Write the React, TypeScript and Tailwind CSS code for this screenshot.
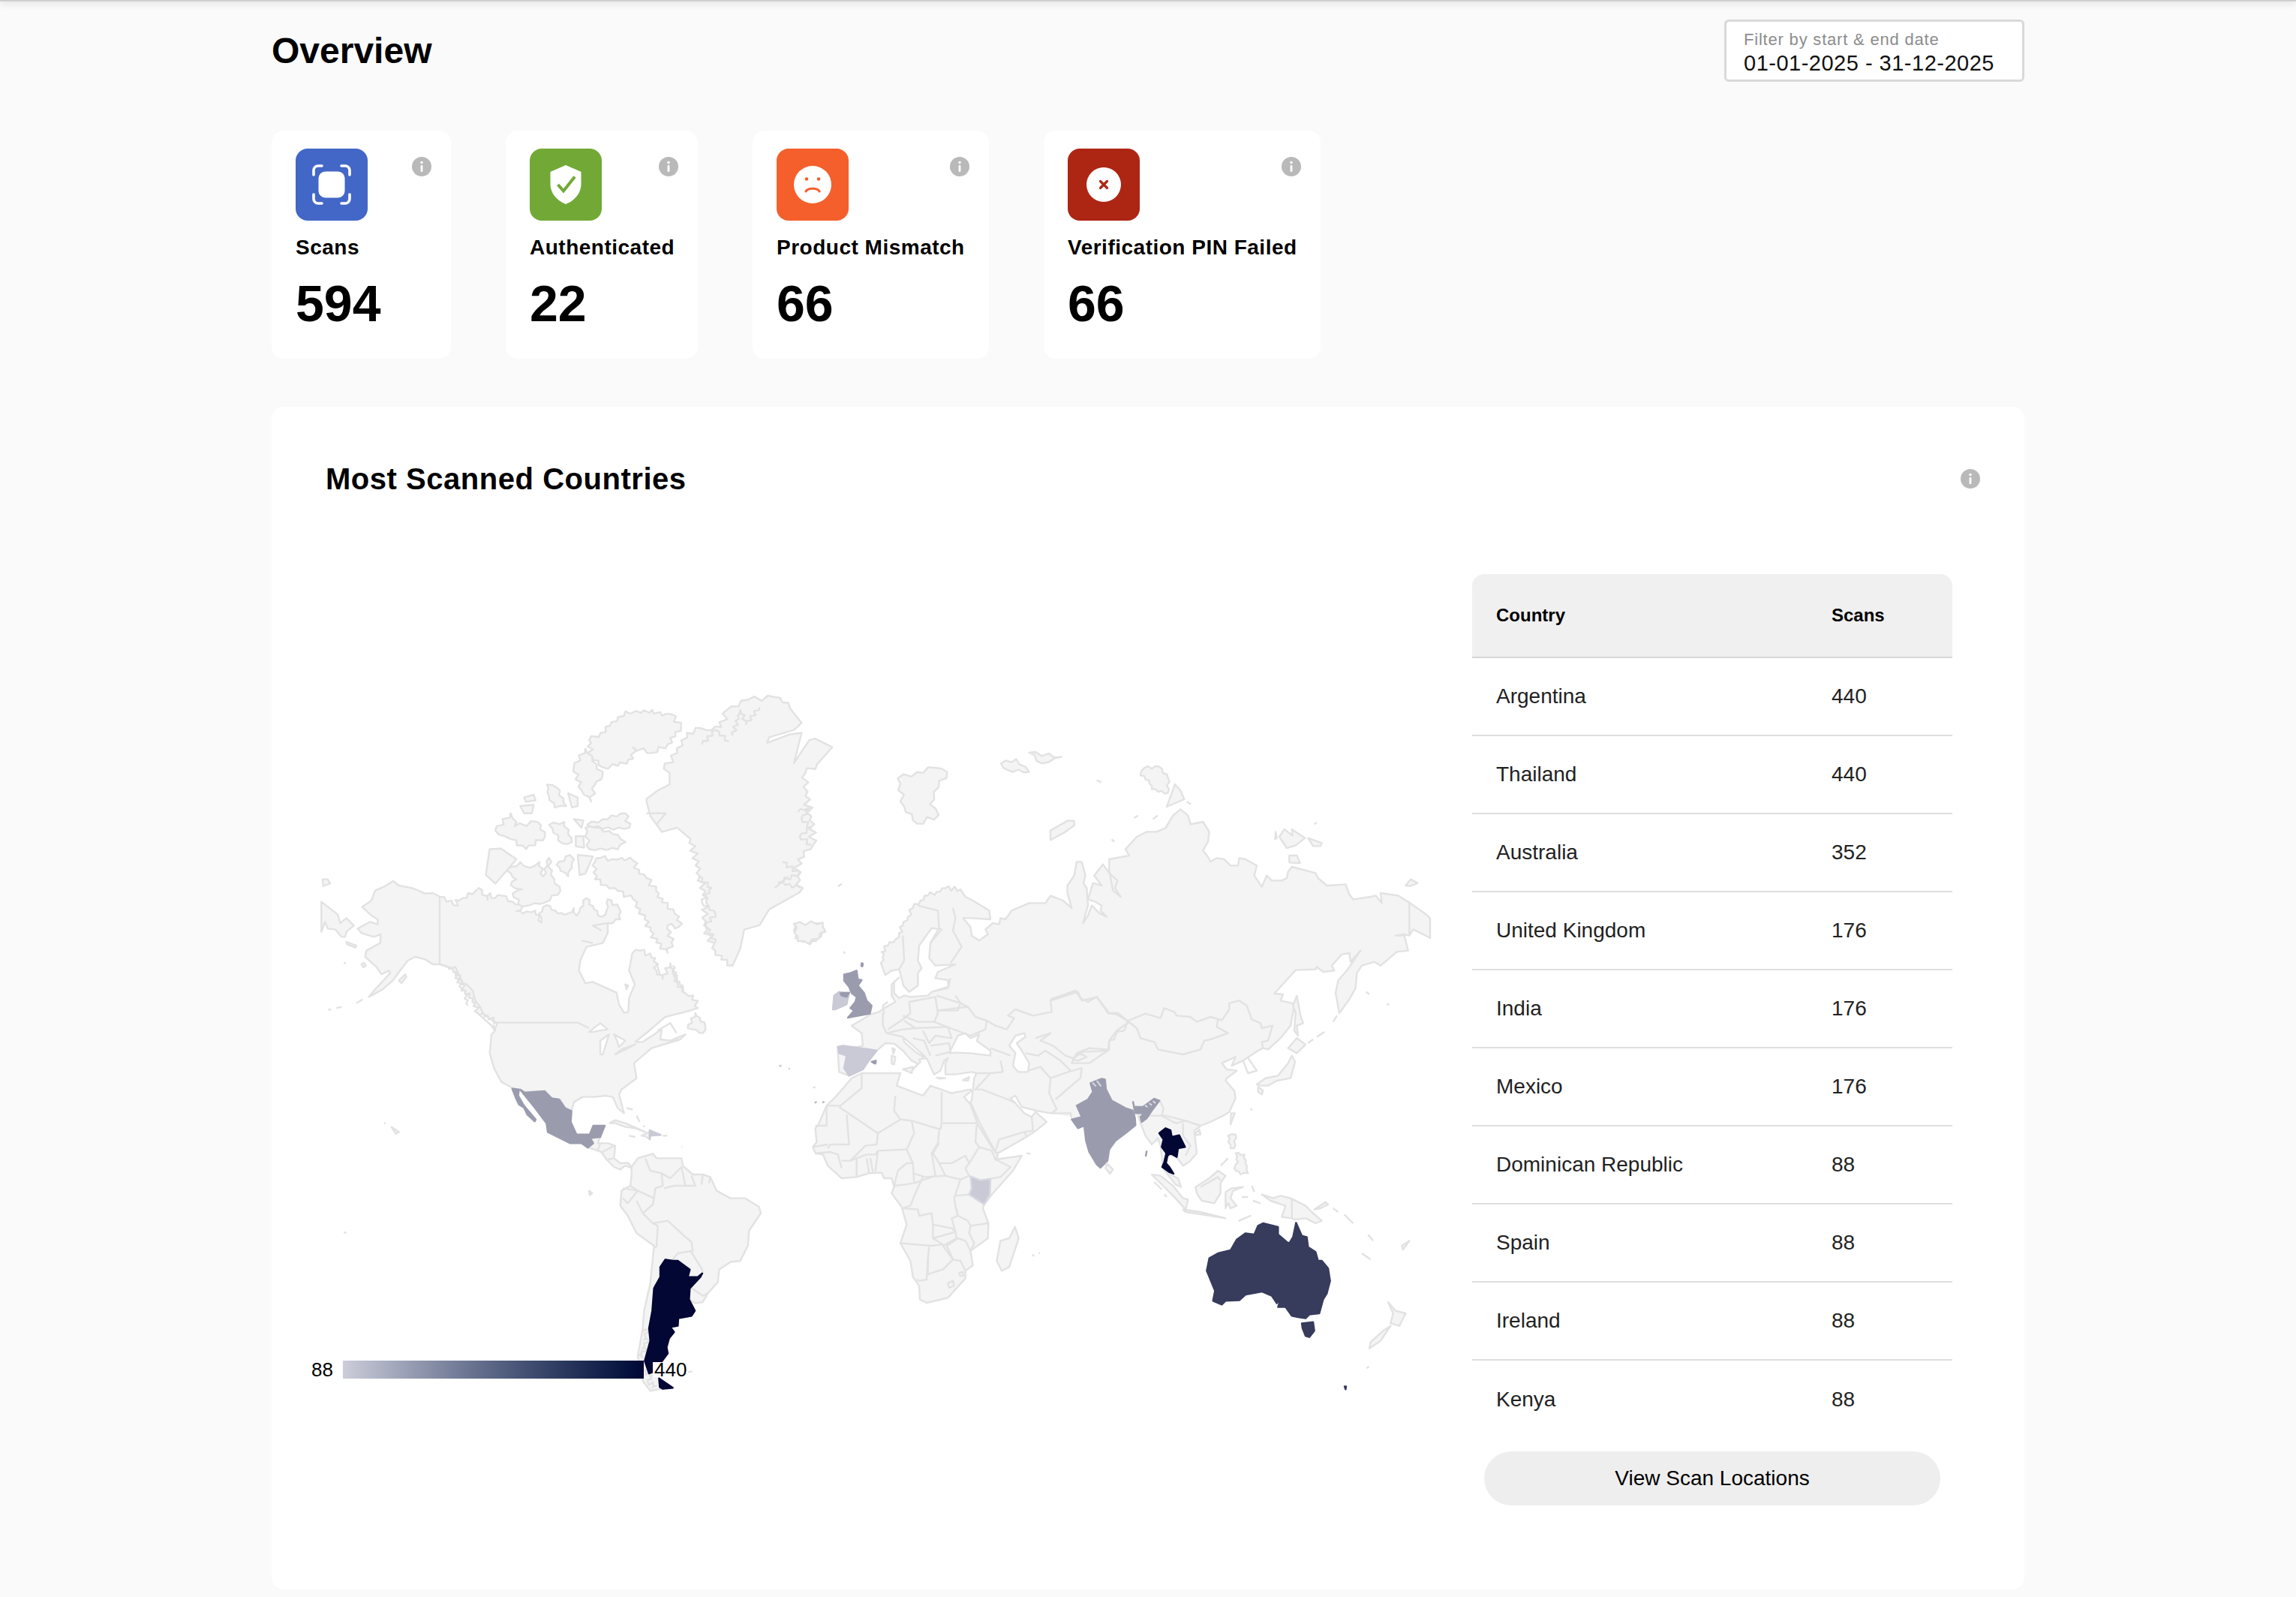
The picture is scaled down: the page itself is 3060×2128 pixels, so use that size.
import type { ReactNode } from 'react';

const LAND = '#f4f4f4';
const LINE = '#e2e2e2';
const LIGHT = '#c9cad6';
const MID = '#9a9cae';
const DEEP = '#373b5c';
const DARK = '#020734';

const STATS = [
	{ label: 'Scans', value: '594', color: 'bg-[#4267c6]', width: 'w-[239px]', icon: 'scan' },
	{ label: 'Authenticated', value: '22', color: 'bg-[#72a936]', width: 'w-[256px]', icon: 'shield' },
	{ label: 'Product Mismatch', value: '66', color: 'bg-[#f45f2c]', width: 'w-[315px]', icon: 'sad' },
	{ label: 'Verification PIN Failed', value: '66', color: 'bg-[#ad2513]', width: 'w-[369px]', icon: 'fail' },
];

const COUNTRIES = [
	['Argentina', '440'],
	['Thailand', '440'],
	['Australia', '352'],
	['United Kingdom', '176'],
	['India', '176'],
	['Mexico', '176'],
	['Dominican Republic', '88'],
	['Spain', '88'],
	['Ireland', '88'],
	['Kenya', '88'],
];

// fjord coasts: split each edge in short steps and push them to alternate sides
const jagged = (points: string, amp: number, step = 16) => {
	const pts = points.trim().split(/\s+/).map((p) => p.split(',').map(Number));
	const out: string[] = [];
	let n = 0;
	for (let i = 0; i < pts.length - 1; i++) {
		const [x1, y1] = pts[i];
		const [x2, y2] = pts[i + 1];
		const len = Math.hypot(x2 - x1, y2 - y1) || 1;
		const parts = Math.max(1, Math.round(len / step));
		for (let j = 0; j < parts; j++) {
			const t = j / parts;
			n++;
			const d = j === 0 ? 0 : (n % 2 ? 1 : -1) * amp * (0.4 + 0.6 * Math.abs(Math.sin(n * 12.9898)));
			out.push(`${(x1 + (x2 - x1) * t - ((y2 - y1) / len) * d).toFixed(1)},${(y1 + (y2 - y1) * t + ((x2 - x1) / len) * d).toFixed(1)}`);
		}
	}
	out.push(pts[pts.length - 1].join(','));
	return out.join(' ');
};

const InfoIcon = () => (
	<svg viewBox="0 0 26 26" className="h-[26px] w-[26px] shrink-0">
		<circle cx="13" cy="13" r="13" fill="#b9b9b9" />
		<circle cx="13" cy="7.5" r="1.8" fill="#fff" />
		<rect x="11.6" y="11" width="2.8" height="9" rx="1" fill="#fff" />
	</svg>
);

const StatIcon = ({ name }: { name: string }) => {
	if (name === 'scan') {
		return (
			<svg viewBox="0 0 96 96" className="h-24 w-24">
				<rect x="30.5" y="30.5" width="35" height="35" rx="9" fill="#fff" />
				<path
					d="M24 35v-6a6 6 0 0 1 6-6h5M61 23h5a6 6 0 0 1 6 6v6M72 61v6a6 6 0 0 1-6 6h-5M35 73h-5a6 6 0 0 1-6-6v-6"
					fill="none"
					stroke="#fff"
					strokeWidth="3.6"
					strokeLinecap="round"
				/>
			</svg>
		);
	}
	if (name === 'shield') {
		return (
			<svg viewBox="0 0 96 96" className="h-24 w-24">
				<path d="M48 22l20.5 9v16c0 12-8 22-20.5 27C35.5 69 27.5 59 27.5 47V31z" fill="#fff" />
				<path d="M37.5 48l7.5 8.5L60 37.5" fill="none" stroke="#72a936" strokeWidth="4" />
			</svg>
		);
	}
	if (name === 'sad') {
		return (
			<svg viewBox="0 0 96 96" className="h-24 w-24">
				<circle cx="48" cy="48" r="25" fill="#fff" />
				<circle cx="40" cy="40.5" r="2.3" fill="#f45f2c" />
				<circle cx="56" cy="40.5" r="2.3" fill="#f45f2c" />
				<path d="M39 57c2.5-5 15.5-5 18 0" fill="none" stroke="#f45f2c" strokeWidth="3" strokeLinecap="round" />
			</svg>
		);
	}
	return (
		<svg viewBox="0 0 96 96" className="h-24 w-24">
			<circle cx="48" cy="48" r="23" fill="#fff" />
			<path d="M43.5 43.5l9 9M52.5 43.5l-9 9" stroke="#ad2513" strokeWidth="3.2" strokeLinecap="round" />
		</svg>
	);
};

const Shape = ({ points, fill = LAND, stroke = LINE, jag = 0, step = 14 }: { points: string; fill?: string; stroke?: string; jag?: number; step?: number }) => (
	<polygon
		points={jag ? jagged(`${points} ${points.split(' ')[0]}`, jag, step) : points}
		fill={fill}
		stroke={stroke}
		strokeWidth="2.4"
		strokeLinejoin="round"
		vectorEffect="non-scaling-stroke"
	/>
);

const Lines = ({ items, color = LINE, width = 2.4 }: { items: string[]; color?: string; width?: number }) => (
	<>
		{items.map((points) => (
			<polyline
				key={points}
				points={points}
				fill="none"
				stroke={color}
				strokeWidth={width}
				strokeLinejoin="round"
				vectorEffect="non-scaling-stroke"
			/>
		))}
	</>
);

// every group below uses the coordinates of one crop of the map, so it stays readable against it
const Crop = ({ x, y, sx = 1 / 3, sy = 1 / 3, children }: { x: number; y: number; sx?: number; sy?: number; children: ReactNode }) => (
	<g transform={`translate(${x} ${y}) scale(${sx} ${sy})`}>{children}</g>
);

const WEST_COAST = [
	'1020,40 1000,70 935,70 865,100 840,135 820,130 815,155 790,150 760,175 770,195 735,220 705,200 700,165 670,130 700,130 780,135 775,100 710,60 680,45 660,15',
	jagged('660,15 600,10 565,25 530,40 500,60 470,90 450,125 430,160 415,190 400,215 370,240 345,265 350,285 342,310', 9, 13),
	'360,358 385,340 415,335 425,370 432,400 455,425 490,400 490,350 505,330 490,300 495,240 545,170 585,175 540,230 535,290 560,320 640,315 570,345 560,370 610,378 612,405 545,425 530,440 460,445 435,440 415,450 395,430 395,385 415,368 385,395 385,440 400,465 355,490 335,505 300,515 260,540 225,560 265,590 270,640 250,645 170,645 170,665 175,745 215,760 270,735 290,705 325,660 360,630 395,632 430,660 465,700 490,712 470,735 500,705 495,695 520,690 480,665 435,625 430,605 470,640 515,680 530,700 545,735 555,755 580,740 595,700 610,690 600,710 600,755 640,755 705,745 725,750 715,770 705,860 700,865 735,945 800,1065 810,1070 915,1010 955,985 1005,945 960,905 945,925 915,910 880,870 860,850 880,840 905,885 965,900 1020,910 1100,910 1105,930',
].join(' ');

const EAST_COAST =
	'0,520 50,540 85,570 68,510 68,480 95,440 105,385 125,385 140,440 132,470 145,490 150,560 130,630 150,600 165,560 195,590 225,605 200,580 205,560 180,545 150,535 170,470 205,480 175,440 190,420 210,395 235,430 268,460 258,490 280,525 250,500 235,420 235,375 315,360 300,335 345,285 385,265 425,265 460,250 490,200 520,175 550,200 560,235 610,225 635,265 630,305 610,340 630,365 640,385 665,370 695,375 720,400 750,400 755,370 780,375 825,400 815,440 845,485 865,440 885,460 925,460 945,450 950,425 965,405 1060,430 1070,450 1105,480 1180,475 1195,515 1210,535 1280,525 1300,520 1325,550 1320,510 1390,520 1435,548 1495,590 1518,610 1518,690 1490,675 1450,655 1435,680 1410,675 1380,680 1415,680 1430,740 1385,745 1320,800 1295,785 1245,800 1225,830 1220,890 1195,935 1155,990 1140,910 1150,860 1185,820 1240,740 1200,785 1195,750 1165,755 1125,800 1135,820 1090,825 1065,805 1060,815 980,818 895,912 930,915 920,940 965,950 975,960 960,1040 920,1090 870,1135 850,1130 830,1140 770,1180 725,1200 740,1165 685,1190 705,1215 745,1220 705,1250 700,1260 735,1300 740,1330 715,1385 690,1400 640,1425 600,1440 590,1450';

const NORTH_AMERICA = [
	'312,132 335,150 362,155 395,162 440,182 470,180 500,195',
	jagged('500,195 570,230 560,208 590,200 640,172 655,160 690,207 700,180 705,200 745,190 790,215 830,235 805,252 830,262 880,250 905,298 895,262 925,228 945,247 970,262 1010,262 1035,240 1045,270 1060,240 1085,200 1115,245 1145,275 1165,250 1170,205 1215,240 1220,285 1170,300', 7, 15),
	'1170,340 1150,380 1085,395 1060,450 1055,490 1080,540 1110,535 1205,578 1215,625 1235,658 1252,655 1255,600 1278,545 1255,490 1268,420',
	jagged('1268,420 1300,410 1360,440 1365,490 1390,522 1420,460 1450,540 1480,580 1512,590 1530,640', 10, 14),
	'1480,655 1400,675 1330,735 1280,775 1310,775 1385,725 1380,765 1420,770 1480,745 1460,765 1410,780 1345,800 1310,830 1275,860 1285,920 1225,965 1215,985 1235,1060 1210,1040 1190,995 1160,990 1120,995 1070,995 1035,1015 1025,1050 1000,1040 980,1005 955,1008 918,972 840,975 790,960 745,935 715,880 698,820 705,745 715,735 728,700',
	jagged('728,700 690,670 650,660 640,620 600,570 565,495 530,475', 10, 11),
	'500,465 470,465 440,445 400,435 370,450 340,490 310,530 270,565 215,595 240,565 300,500 295,490 265,505 245,475 200,435 205,410 260,380 262,345 235,355 185,340 170,322 220,295 250,305 250,285 225,270 188,235 225,210 240,170 275,155',
].join(' ');

const GREENLAND = [
	'905,430 935,400 965,380 965,340 950,325',
	jagged('950,325 985,270 1010,200 1050,185 1060,190 1100,180 1115,120 1170,85 1240,75 1275,95', 9, 16),
	'1280,115 1310,165 1290,190 1225,215 1220,235 1280,205 1310,200 1290,305 1330,225 1345,220 1390,250 1350,310',
	jagged('1350,310 1320,340 1320,420 1335,490 1340,590 1300,640 1300,700 1305,755', 10, 15),
	'1225,815 1200,870 1160,885 1150,950 1130,1010',
	jagged('1130,1010 1100,990 1085,960 1055,870 1060,790 1045,700 1020,570', 9, 13),
	'985,530 945,545 915,490 905,440',
].join(' ');

const Asia = () => (
	<>
		<Crop x={1060} y={1180}>
			<polygon points={`${WEST_COAST} 1130,880 1300,700 1560,600 1560,400 1300,150 1110,130`} fill={LAND} />
		</Crop>
		<Crop x={1400} y={1020}>
			<polygon points={`${EAST_COAST} 530,1480 480,1500 400,1510 385,1400 340,1400 140,1440 85,1405 0,1390`} fill={LAND} />
			<Lines items={[EAST_COAST]} />
		</Crop>
		<Crop x={1420} y={1340}>
			<Shape points="290,440 400,440 480,460 540,480 515,500 525,590 495,625 470,640 455,620 440,600 405,600 390,645 420,675 450,690 462,725 440,715 420,690 390,650 380,560 370,530 345,555 320,520 300,470" />
			<Lines
				items={[
					'375,375 392,410 385,440 430,465 445,470 480,460',
					'470,470 470,520 500,560 480,600',
					'285,400 310,430 300,470',
				]}
			/>
		</Crop>
		<Crop x={1060} y={1180}>
			<Lines items={[WEST_COAST]} />
			<Shape fill="#fff" points="615,670 650,600 680,590 700,610 735,595 725,620 780,660 780,680 700,670 640,668" />
			<Shape fill="#fff" points="880,600 915,590 920,605 885,630 905,660 935,710 930,745 890,745 870,720 880,670 855,640" />
			<Shape points="1110,695 1135,670 1165,685 1130,700" />
			<Lines
				items={[
					'350,510 350,560 365,590 430,605',
					'455,465 460,510 430,535 370,575',
					'455,465 560,445 570,510 555,545 490,545 430,520',
					'565,440 660,470 650,500 565,500',
					'565,500 690,485 720,525 765,540 760,575 700,600 620,570 555,545',
					'545,425 610,410 620,370',
					'480,570 610,565 625,610 560,600 535,630 510,580',
					'540,640 615,630 620,665 560,680',
					'470,610 515,620 540,680',
					'365,590 430,575 480,570 435,540',
					'355,515 350,480 370,465',
					'630,90 640,130 630,180 665,245 620,310',
					'490,80 570,100 575,170 540,230',
					'430,200 435,300 415,335',
					'640,440 660,470 690,485',
					'765,540 800,560 845,575 875,530 850,520 880,495 950,520 1025,505 1020,460 1130,425 1145,460 1205,445 1250,510 1285,515 1335,545',
					'780,650 860,680',
					'820,700 830,745',
					'920,670 970,680 1000,660 1060,700 1100,740',
					'960,610 1020,590 980,620 1030,640 1080,680 1110,690 1150,665 1250,660 1255,620 1285,580 1335,545',
					'930,740 980,725 1020,770 1015,830 1045,895 1025,910',
					'1020,770 1090,745 1145,730 1140,770 1115,790 1040,855',
					'725,750 780,750 830,745',
					'745,815 720,815 780,750',
					'745,815 850,855 880,870',
					'945,925 950,980 915,985 815,1015 800,1060',
					'915,985 925,1005',
				]}
			/>
			<Shape points="265,310 270,312 268,323 264,322" fill={MID} stroke={MID} />
			<Shape points="245,340 250,375 265,378 250,400 275,430 285,460 305,480 298,512 210,528 235,500 220,490 240,465 245,445 225,430 215,405 195,380 195,355 220,350" fill={MID} stroke={MID} />
			<Shape points="155,440 175,425 215,430 205,475 160,495 150,495" fill={LIGHT} stroke={LIGHT} />
			<Shape points="180,430 215,428 205,445 185,440" fill={MID} stroke={MID} />
			<Shape points="170,645 190,640 300,655 325,660 290,705 270,735 215,760 195,730 205,680 175,670" fill={LIGHT} stroke={LIGHT} />
			<Shape points="305,705 322,700 320,712" fill={MID} stroke={MID} />
			<Shape points="385,680 400,685 395,715 385,712" />
			<Shape points="388,650 398,655 392,672" />
			<Shape points="430,735 470,725 465,750" />
			<Shape points="565,768 600,770 575,772" />
			<Shape points="670,778 695,765 690,780" />
			<Shape points="0,165 35,175 95,150 120,185 60,235 30,225 0,210" jag={7} />
		</Crop>
		<Crop x={1400} y={1020}>
			<Lines
				items={[
					'0,935 100,900 120,930 150,945 185,925 235,990 270,990 345,1050 360,1090 415,1105 430,1135 530,1155 600,1135 615,1100 640,1095 710,1070 665,1045 670,1015',
					'310,1020 380,992 440,1010 455,970 495,985 505,1000 560,1005 585,1025 640,1005 685,1018 715,975 715,950 755,940 785,960 805,1015 840,1030 845,1050 888,1040 870,1100 845,1105 850,1130',
					'310,1020 295,1060 265,1065 255,1095 235,1100 235,1135 155,1190',
					'225,1135 155,1130 105,1150 85,1190 155,1190',
					'770,1180 790,1230 825,1220 790,1170',
					'1435,548 1435,680',
				]}
			/>
			<Shape points="0,260 70,220 95,222 95,240 60,265 0,298" />
			<Shape points="985,920 1000,1000 1010,1030 985,1040 990,1080 975,1060 980,990 970,960" />
			<Shape points="985,1090 1020,1115 985,1150 950,1130" />
			<Shape points="965,1160 978,1185 960,1250 905,1260 870,1280 840,1280 825,1275 860,1250 910,1240 950,1190" />
			<Shape points="830,1285 850,1300 845,1315 830,1305" />
			<Shape points="722,1390 737,1390 720,1435" />
			<Shape points="900,265 905,290 898,295" />
			<Shape points="915,285 935,255 968,280 965,255 1018,290 980,320 945,330" />
			<Shape points="1030,290 1085,310 1080,322 1050,322" />
			<Shape points="955,360 985,360 998,390 955,388" />
			<Shape points="1420,480 1440,455 1468,470 1440,482" />
			<Shape points="360,40 375,10 435,5 470,50 470,110 430,105 405,95 395,60" jag={6} />
			<Shape points="465,165 498,75 520,100 535,135" />
			<Lines
				items={['1262,905 1275,915', '1345,955 1355,955', '1130,1025 1145,1000', '1065,1085 1095,1065', '1030,1110 1050,1095', '800,1378 806,1372', '245,295 255,305', '335,210 350,200', '410,215 428,200', '185,58 203,68', '545,145 562,155', '1055,235 1065,228']}
			/>
		</Crop>
		<Crop x={1050} y={1000} sx={1 / 1.742} sy={1 / 1.742}>
			<Shape points="255,65 300,50 340,40 370,50 350,85 330,125 350,150 300,170 270,130" jag={6} />
			<Shape points="495,30 530,20 560,50 510,45" jag={4} />
			<Shape points="560,5 635,15 590,30" jag={4} />
		</Crop>
	</>
);

const Africa = () => (
	<Crop x={1060} y={1450}>
		<Shape points="225,-40 165,30 125,70 90,150 80,160 85,215 70,235 80,260 110,265 130,310 185,360 245,355 295,340 345,338 355,360 385,360 395,395 385,420 425,475 445,545 420,620 460,690 470,755 495,790 498,845 525,858 610,838 680,760 680,730 710,708 700,650 770,600 772,540 750,480 755,465 790,420 870,330 905,270 800,285 810,270 785,235 730,145 700,65 675,35 705,10 700,5 625,20 540,-10 510,30 405,-10 420,-60 380,-60 265,-60" />
		<Lines
			items={[
				'265,-60 265,0 180,70 125,70 125,150 80,150',
				'175,75 330,180',
				'205,105 215,225 140,225 130,240',
				'330,180 325,225 280,230 220,290 185,290',
				'330,180 420,125 465,130 475,180 445,245 330,250',
				'400,30 395,90 420,125 465,130 580,165 585,140 585,15',
				'585,140 725,140',
				'445,245 470,300 475,380 560,350 545,260 570,220 575,170',
				'575,220 550,260 575,300 625,300 680,270 695,300 735,235 720,215 725,145',
				'575,300 600,350 660,365 695,350 680,320 695,300',
				'735,235 785,250 800,285 860,315 820,355 780,362',
				'330,250 320,335',
				'410,330 445,300 470,300',
				'410,330 395,390 440,385 470,380',
				'245,280 245,355',
				'285,280 295,340',
				'300,280 310,335',
				'220,290 285,265 320,265 330,250',
				'80,260 140,255 170,265 185,320',
				'470,340 520,355 600,350',
				'510,355 480,420 460,470 430,480 490,485 495,510 545,500 550,545 625,560 640,575 625,520 650,510 640,470 635,440 660,365',
				'700,425 640,430',
				'640,470 650,510 690,530 700,550 770,540',
				'550,545 550,600 590,625 540,630 425,620',
				'550,600 640,575 645,600 590,630',
				'700,550 695,580 715,620 700,650 680,610 650,600 605,630 630,685 660,690 680,730',
				'590,630 630,685 590,725 555,735 530,745 530,680 535,635',
				'530,680 525,765 495,770 485,765',
				'70,235 130,225',
				'80,262 115,262',
			]}
		/>
		<Shape points="610,780 630,770 635,790 615,798" />
		<Shape points="655,738 670,735 672,750 658,750" />
		<Shape points="700,352 740,368 780,362 778,425 755,465 695,425 705,400" fill={LIGHT} stroke="#d8d9e0" />
		<Shape points="878,555 893,600 855,715 825,730 805,690 820,610 855,600" />
		<Lines items={['948,665 955,672', '973,658 978,660', '925,260 940,262', '78,58 86,55', '108,55 116,55']} />
	</Crop>
);

const SouthAsia = () => (
	<Crop x={1420} y={1340}>
		<Shape points="145,292 158,295 162,335 175,360 185,380 240,410 270,420 278,450 280,478 240,510 200,540 175,575 168,620 140,648 125,635 95,585 82,540 75,480 50,490 25,455 65,445 45,400 90,375 110,345 100,310" fill={MID} stroke={MID} />
		<Shape points="270,385 275,405 310,405 355,372 375,380 345,420 325,450 305,465 300,445 315,430 280,430 275,410" fill={MID} stroke={MID} />
		<Lines color="#dcdce4" width={2} items={['108,308 122,322', '125,300 142,322', '318,398 328,406', '335,390 345,398', '350,382 360,390']} />
		<Shape points="375,510 400,490 420,498 425,525 455,518 478,565 450,570 445,605 420,590 408,600 402,630 415,645 432,672 415,665 387,645 395,625 403,590 385,565 392,535" fill={DARK} stroke={DARK} />
		<Shape points="165,630 190,655 178,672 160,650" />
		<Shape points="515,515 535,495 540,515 520,518" />
		<Lines color={MID} items={['325,580 321,603']} />
		<Shape points="650,520 680,515 675,570 660,570" jag={4} />
		<Shape points="680,590 715,595 720,630 730,670 700,675 675,650 690,625" jag={4} />
		<Shape points="345,675 380,680 430,720 470,770 490,775 480,815 440,770 390,720" />
		<Shape points="470,815 540,825 640,850 580,840 480,825" />
		<Shape points="520,725 575,690 610,660 640,680 620,710 620,750 595,790 545,780 525,750" />
		<Shape points="640,745 665,730 710,725 670,740 660,770 685,800 660,810 650,790 640,810" />
		<Shape points="785,755 830,770 860,760 900,770 960,800 985,825 1025,860 1000,870 960,850 915,855 905,850 865,845 880,800 820,780" />
		<Shape points="995,815 1040,785 1050,795 1020,810" />
		<Shape points="695,860 740,840 715,850" />
		<Shape points="1290,1185 1320,1220 1360,1230 1335,1280 1300,1270 1310,1230" />
		<Shape points="1300,1280 1260,1340 1215,1370 1220,1345 1270,1300" />
		<Shape points="1345,960 1375,940 1350,975" />
		<Lines
			items={[
				'905,775 905,850',
				'540,725 610,685 620,700',
				'1185,990 1220,1015',
				'1210,915 1230,940',
				'1070,810 1090,825',
				'1115,835 1150,870',
				'705,765 730,765',
				'750,780 780,790',
				'745,720 755,745',
				'620,640 650,610',
				'355,705 385,735',
				'395,755 405,765',
				'1205,1450 1213,1442',
			]}
		/>
		<Shape points="922,868 945,920 965,925 970,965 1000,985 1010,1020 1025,1020 1050,1050 1058,1100 1045,1150 1030,1175 1015,1230 975,1235 960,1250 930,1245 905,1240 880,1205 850,1205 862,1165 845,1190 825,1160 785,1143 720,1155 695,1178 640,1180 625,1195 590,1180 598,1140 565,1060 575,1010 610,990 660,978 685,935 720,910 755,915 770,880 790,870 850,885 850,915 885,945 895,950 910,925" fill={DEEP} stroke={DEEP} />
		<Shape points="945,1270 990,1265 995,1300 975,1325 960,1320 948,1290" fill={DEEP} stroke={DEEP} />
		<Shape points="1116,1522 1122,1522 1120,1534" fill={DEEP} stroke={DEEP} />
	</Crop>
);

const SouthAmerica = () => (
	<Crop x={640} y={1380}>
		<Shape points="605,525 630,490 690,472 705,490 770,490 805,490 810,520 850,555 890,555 920,565 945,620 1000,650 1060,650 1115,685 1122,710 1075,780 1070,840 1040,900 1000,905 955,935 950,985 910,1030 890,1065 860,1070 838,1055 858,1100 845,1120 792,1130 790,1160 760,1165 775,1185 755,1210 750,1245 735,1245 750,1270 720,1310 715,1370 770,1408 730,1410 680,1420 650,1380 630,1280 650,1170 655,1100 680,990 695,840 625,790 590,720 560,680 565,620 600,600 605,560" />
		<Lines
			items={[
				'660,490 680,540 725,550 730,600 700,610 695,650 630,620 600,600',
				'725,550 760,570 805,525 820,600 775,600 735,610',
				'820,600 860,600 845,560',
				'890,555 885,595',
				'920,565 915,590',
				'695,650 690,675 650,710 690,750 750,740 815,800 845,825 850,860 790,870 765,900',
				'840,860 885,930 890,945',
				'570,610 630,620 590,670 570,650',
				'650,710 625,660',
				'690,750 710,760 705,840 700,850',
				'840,1005 890,1040 910,1030',
				jagged('650,1185 668,1175 655,1215 672,1215 648,1250 665,1255 632,1275 650,1290', 6, 10),
				jagged('650,1340 690,1360 670,1385 705,1400 685,1410', 8, 9),
				'830,1345 848,1342',
			]}
		/>
		<Shape points="740,895 770,900 790,900 838,935 830,965 870,965 888,950 880,965 838,1010 835,1055 858,1100 845,1120 792,1130 790,1160 760,1165 775,1185 755,1210 745,1245 750,1270 720,1310 700,1300 690,1345 675,1350 658,1300 680,1220 675,1170 688,1100 695,1010 720,965 720,925" fill={DARK} stroke={DARK} />
		<Shape points="715,1370 770,1408 730,1412 718,1405" fill={DARK} stroke={DARK} />
		<Lines color={LIGHT} items={['1195,120 1205,122', '1233,132 1238,132']} />
		<Lines color="#b7b8c6" items={['1337,268 1345,265', '1368,266 1376,266']} />
		<Lines items={['1330,207 1340,207', '805,445 808,445']} />
	</Crop>
);

const NorthAmerica = () => (
	<>
		<Crop x={420} y={1130}>
			<Shape points={NORTH_AMERICA} />
			<Shape fill="#fff" points="1095,735 1140,700 1170,725 1135,730 1115,735" />
			<Shape fill="#fff" points="1140,770 1175,745 1150,825 1140,825" />
			<Shape fill="#fff" points="1195,745 1240,770 1215,795 1205,765" />
			<Shape fill="#fff" points="1200,825 1280,785 1225,805" />
			<Shape points="1240,545 1252,550 1245,565" />
			<Lines
				items={[
					'498,195 498,465',
					'728,698 1050,698 1095,720',
					'500,465 545,480 560,475 590,540 605,545 630,570 640,610 660,635 670,660 710,690 728,700',
					jagged('560,500 585,560 600,580 610,630', 8, 10),
					'655,665 700,705 720,730 712,705',
					'1170,300 1110,310 1145,330',
					'1065,370 1110,380',
					jagged('1430,470 1445,530 1470,550 1465,575', 7, 10),
					'1380,510 1365,460',
					'1445,740 1420,700 1370,730',
				]}
			/>
			<Shape points="25,215 90,265 100,300 125,280 155,310 125,335 120,355 105,355 80,325 50,322 40,295 25,335" />
			<Shape points="125,375 165,390 160,398 128,385" />
			<Shape points="30,125 50,125 60,142 32,152" />
			<Shape points="185,465 195,458 203,470 192,477" />
			<Shape points="335,530 360,505 365,515 345,540" />
			<Shape points="305,1115 320,1125 335,1135 322,1142" />
			<Shape points="1095,1370 1108,1380 1098,1388" />
			<Shape points="1490,720 1520,660 1560,710 1550,740 1510,725" jag={6} />
			<Lines items={['165,620 190,605', '85,640 105,635', '52,646 64,646', '275,1100 282,1100', '115,458 122,462', '115,1535 124,1540']} />
			<Shape points="1178,1100 1200,1088 1240,1100 1320,1135 1280,1120 1240,1115 1200,1100" />
			<Shape points="1305,1150 1335,1135 1338,1165 1320,1152" />
			<Shape points="1338,1128 1382,1147 1340,1150 1338,1165" fill={LIGHT} stroke={LIGHT} />
			<Lines items={['1255,1150 1280,1155', '1390,1150 1408,1150', '1245,1040 1270,1045', '1285,1070 1298,1095', '1312,1110 1318,1115']} />
			<Shape points="1100,1160 1140,1155 1130,1180 1170,1180 1200,1190 1195,1240 1220,1260 1250,1258 1270,1280 1240,1270 1220,1285 1195,1275 1165,1245 1145,1215 1095,1198 1112,1180" />
			<Lines items={['1140,1180 1130,1210', '1150,1215 1195,1190', '1170,1245 1195,1240']} />
			<Shape points="788,962 815,965 812,990 835,1030 882,1085 878,1093 848,1065 835,1038 815,1025 805,1005" fill={MID} stroke={MID} />
			<Shape points="820,965 838,978 918,972 945,1000 975,1005 1000,1040 1025,1052 1022,1095 1045,1145 1098,1145 1112,1110 1158,1110 1140,1155 1100,1160 1112,1180 1090,1198 1065,1180 1020,1180 930,1135 925,1100 880,1040 835,985" fill={MID} stroke={MID} />
		</Crop>
		<Crop x={400} y={900} sx={1 / 1.96} sy={1 / 2.613}>
			<Shape points="495,605 525,603 565,640 510,725 485,695" />
			<Shape points="540,680 575,650 600,670 625,650 635,700 650,635 655,695 680,750 640,790 600,800 580,805 555,760 580,745 550,730 565,710" jag={5} />
			<Shape points="670,660 705,625 715,640 700,700 680,680" jag={4} />
			<Shape points="725,625 765,630 745,690 730,695" />
			<Shape points="770,650 785,635 815,640 840,635 870,645 885,690 905,705 930,750 945,790 975,815 990,840 990,875 960,870 970,930 960,965 930,930 915,890 900,850 870,780 830,750 800,730 770,710" jag={8} step={12} />
			<Shape points="755,225 785,200 810,175 830,145 850,125 890,130 920,120 945,140 970,135 995,180 960,240 920,270 870,250 870,290 830,315 790,320 760,280" jag={8} step={12} />
			<Shape points="715,320 745,255 775,310 790,350 770,380 760,440 735,400" jag={6} />
			<Shape points="750,520 790,500 850,480 860,530 790,535" jag={6} />
			<Shape points="745,530 770,530 830,555 850,580 830,605 755,605" jag={5} />
			<Shape points="510,540 550,480 565,510 560,525 620,510 640,560 590,605 550,570 535,560" jag={7} />
			<Shape points="585,425 610,415 615,435 590,440" />
			<Shape points="645,380 670,390 695,455 665,460 650,420" jag={4} />
			<Shape points="700,410 725,425 725,455 710,460" />
			<Shape points="650,520 690,510 710,580 685,585" jag={5} />
			<Shape points="715,500 740,505 735,530" />
			<Shape points="720,560 740,560 742,600 720,595" />
			<Shape points="575,455 610,450 605,480 585,480" />
			<Shape points={GREENLAND} />
			<Lines
				items={[
					jagged('1130,210 1150,120 1165,170 1200,110', 6, 10),
					jagged('1050,240 1085,190 1120,230', 6, 10),
					jagged('1300,475 1330,460 1310,500 1335,530 1305,560 1335,590', 7, 10),
					jagged('1260,650 1305,690 1250,720 1305,740', 7, 10),
					jagged('1040,700 1075,740 1050,790 1085,830 1060,870 1085,930', 6, 10),
					'905,480 955,480 930,520',
					'1240,740 1275,700',
				]}
			/>
			<Shape points="1290,865 1365,860 1372,890 1330,935 1300,925" jag={6} />
			<Lines items={['1405,735 1415,725', '1420,962 1424,968']} />
		</Crop>
	</>
);

const WorldMap = () => (
	<svg viewBox="420 920 1495 950" className="mt-[155px] block h-[950px] w-[1495px]">
		<Asia />
		<Africa />
		<SouthAsia />
		<NorthAmerica />
		<SouthAmerica />
	</svg>
);

const App = () => {
	return (
		<div className="h-[2128px] w-[3060px] overflow-hidden bg-[#fafafa] font-['Liberation_Sans',Arial,sans-serif] text-black">
			<div className="h-[2px] bg-[#cfcfcf] shadow-[0_2px_8px_rgba(0,0,0,0.28)]" />
			<div className="ml-[362px] w-[2336px]">
				<div className="flex items-start justify-between pt-[24px]">
					<h1 className="mt-[14px] text-[48px] leading-[56px] font-bold">Overview</h1>
					<div className="h-[83px] w-[400px] rounded-[6px] border-[3px] border-[#d9d9d9] bg-white pl-[23px] pt-[11px]">
						<div className="text-[22px] leading-[26px] tracking-[0.8px] text-[#8c8c8c]">Filter by start &amp; end date</div>
						<div className="mt-[1px] text-[29px] leading-[34px] tracking-[0.5px] text-[#111]">01-01-2025 - 31-12-2025</div>
					</div>
				</div>
				<div className="mt-[65px] flex gap-[73px]">
					{STATS.map((stat) => (
						<div key={stat.label} className={`h-[304px] rounded-[16px] bg-white px-[32px] pt-[24px] ${stat.width}`}>
							<div className="flex items-start justify-between">
								<div className={`h-24 w-24 rounded-[16px] ${stat.color}`}>
									<StatIcon name={stat.icon} />
								</div>
								<div className="mt-[11px] mr-[-6px]">
									<InfoIcon />
								</div>
							</div>
							<div className="mt-[18px] text-[28px] leading-[36px] font-bold tracking-[0.5px] whitespace-nowrap">{stat.label}</div>
							<div className="mt-[22px] text-[68px] leading-[68px] font-bold">{stat.value}</div>
						</div>
					))}
				</div>
				<div className="mt-[64px] h-[1576px] rounded-[16px] bg-white">
					<div className="flex items-center justify-between pt-[72px] pr-[59px] pl-[72px]">
						<h2 className="text-[40px] leading-[48px] font-bold tracking-[0.53px]">Most Scanned Countries</h2>
						<InfoIcon />
					</div>
					<div className="mt-[103px] flex pl-[58px]">
						<div className="relative">
							<WorldMap />
							<div className="absolute top-[1048px] left-[-5px] flex h-[24px] items-center text-[26px] leading-[20px] text-black">
								<span className="w-[28px]">88</span>
								<div className="ml-[14px] h-[24px] w-[401px] bg-gradient-to-r from-[#cccdd9] to-[#020734]" />
								<span className="ml-[12px] bg-white px-[2px]">440</span>
							</div>
						</div>
						<div className="ml-[47px] w-[640px]">
							<div className="grid h-[112px] grid-cols-[447px_1fr] items-center rounded-t-[16px] border-b-[2px] border-[#d6d6d6] bg-[#f0f0f0] pl-[32px] text-[24px] font-bold">
								<span>Country</span>
								<span>Scans</span>
							</div>
							{COUNTRIES.map(([name, count], i) => (
								<div
									key={name}
									className={`grid h-[104px] grid-cols-[447px_1fr] items-center pl-[32px] text-[28px] text-[#222] ${i < COUNTRIES.length - 1 ? 'border-b-[2px] border-[#dedede]' : ''}`}
								>
									<span>{name}</span>
									<span>{count}</span>
								</div>
							))}
							<button className="mt-[17px] ml-[16px] h-[72px] w-[608px] rounded-full bg-[#eeeeee] text-[28px] text-black">
								View Scan Locations
							</button>
						</div>
					</div>
				</div>
			</div>
		</div>
	);
};

export default App;
